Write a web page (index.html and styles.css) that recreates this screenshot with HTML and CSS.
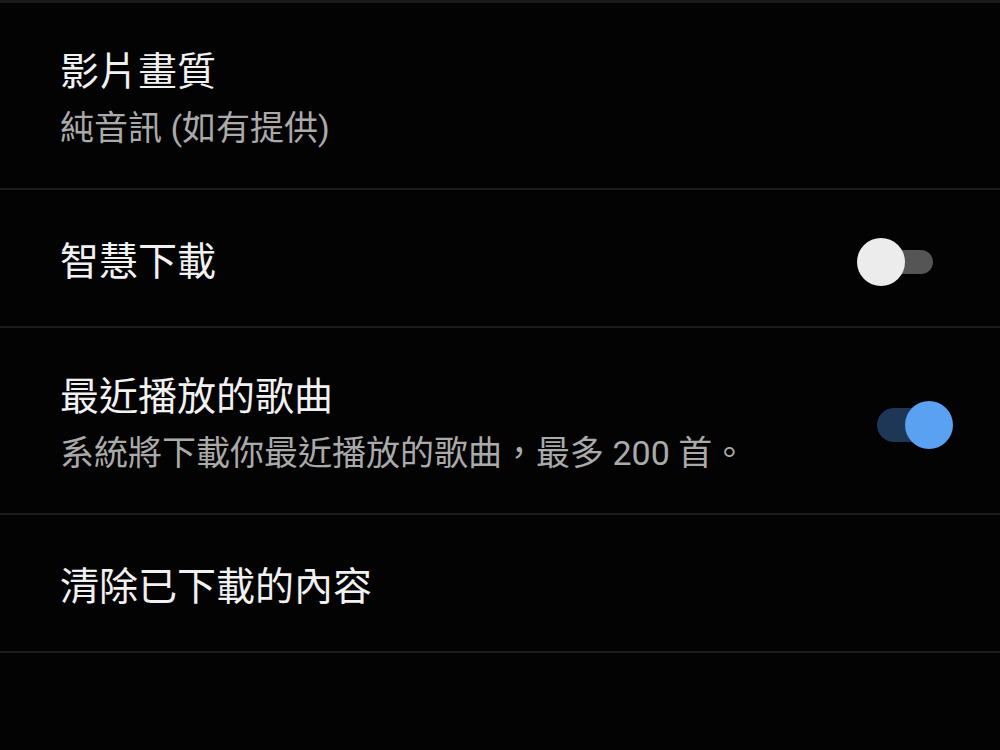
FILE: index.html
```html
<!DOCTYPE html>
<html lang="zh-Hant">
<head>
  <meta charset="UTF-8">
  <meta name="viewport" content="width=device-width, initial-scale=1.0">
  <title>下載設定</title>
  <link rel="stylesheet" href="styles.css">
</head>
<body>

<!-- 下載設定清單 -->
<ul class="settings">
  <li class="row row-tall">
    <div class="text">
      <div class="title">影片畫質</div>
      <div class="subtitle">純音訊 (如有提供)</div>
    </div>
  </li>
  <li class="row">
    <div class="text">
      <div class="title">智慧下載</div>
    </div>
    <div class="switch off">
      <span class="track"></span>
      <span class="thumb"></span>
    </div>
  </li>
  <li class="row row-tall">
    <div class="text">
      <div class="title">最近播放的歌曲</div>
      <div class="subtitle">系統將下載你最近播放的歌曲，最多 200 首。</div>
    </div>
    <div class="switch on">
      <span class="track"></span>
      <span class="thumb"></span>
    </div>
  </li>
  <li class="row">
    <div class="text">
      <div class="title">清除已下載的內容</div>
    </div>
  </li>
</ul>

</body>
</html>
```

FILE: styles.css
```css
body {
  margin: 0;
  padding: 0;
  background-color: #030303;
  font-family: 'Roboto', 'Noto Sans CJK TC', sans-serif;
  color: #f1f1f1;
  width: 1000px;
  height: 750px;
  overflow: hidden;
}

.settings {
  list-style: none;
  margin: 0;
  padding: 0;
  border-top: 3px solid #1b1b1b;
}

.row {
  display: flex;
  align-items: center;
  justify-content: space-between;
  box-sizing: border-box;
  height: 138px;
  padding: 8px 47px 0 60px;
  border-bottom: 2px solid #1c1c1c;
}

.row-tall {
  height: 187px;
}

.title {
  font-size: 39px;
  line-height: 56px;
  color: #f1f1f1;
}

.subtitle {
  font-size: 34px;
  line-height: 56px;
  color: #aaaaaa;
}

.switch {
  position: relative;
  width: 76px;
  height: 48px;
}

.switch .track {
  position: absolute;
  top: 12px;
  height: 24px;
  border-radius: 12px;
}

.switch .thumb {
  position: absolute;
  top: 0;
  width: 48px;
  height: 48px;
  border-radius: 50%;
}

.switch.off {
  margin-right: 20px;
}

.switch.off .track {
  left: 22px;
  right: 0;
  background-color: #555555;
}

.switch.off .thumb {
  left: 0;
  background-color: #ececec;
}

.switch.on .track {
  left: 0;
  right: 22px;
  top: 7px;
  height: 34px;
  border-radius: 17px;
  background-color: #1f3757;
}

.switch.on .thumb {
  right: 0;
  background-color: #5ba1f1;
}
```
